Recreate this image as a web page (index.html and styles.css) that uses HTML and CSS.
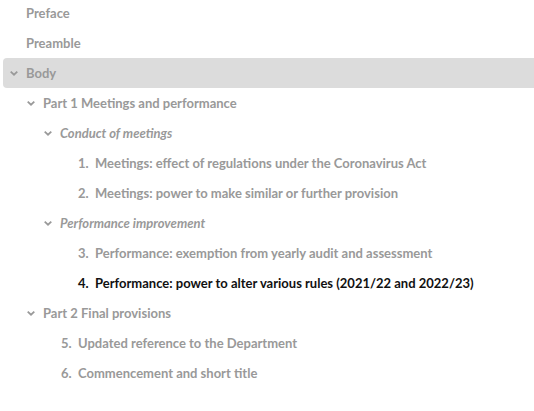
FILE: index.html
```html
<!DOCTYPE html>
<html lang="en">
<head>
    <meta charset="UTF-8">
    <meta name="viewport" content="width=device-width, initial-scale=1.0">
    <title>Contents</title>
    <link rel="stylesheet" href="styles.css">
</head>
<body>
    <ul class="toc">
        <li class="row lvl0"><span class="label">Preface</span></li>
        <li class="row lvl0"><span class="label">Preamble</span></li>
        <li class="row lvl0 selected">
            <svg class="chev" viewBox="0 0 8 5"><path d="M0.7 0.7 L4 3.7 L7.3 0.7" /></svg>
            <span class="label">Body</span>
        </li>
        <li class="row lvl1">
            <svg class="chev" viewBox="0 0 8 5"><path d="M0.7 0.7 L4 3.7 L7.3 0.7" /></svg>
            <span class="label">Part 1 Meetings and performance</span>
        </li>
        <li class="row lvl2">
            <svg class="chev" viewBox="0 0 8 5"><path d="M0.7 0.7 L4 3.7 L7.3 0.7" /></svg>
            <span class="label italic">Conduct of meetings</span>
        </li>
        <li class="row lvl3"><span class="num">1.</span><span class="label">Meetings: effect of regulations under the Coronavirus Act</span></li>
        <li class="row lvl3"><span class="num">2.</span><span class="label">Meetings: power to make similar or further provision</span></li>
        <li class="row lvl2">
            <svg class="chev" viewBox="0 0 8 5"><path d="M0.7 0.7 L4 3.7 L7.3 0.7" /></svg>
            <span class="label italic">Performance improvement</span>
        </li>
        <li class="row lvl3"><span class="num">3.</span><span class="label">Performance: exemption from yearly audit and assessment</span></li>
        <li class="row lvl3 current"><span class="num">4.</span><span class="label">Performance: power to alter various rules (2021/22 and 2022/23)</span></li>
        <li class="row lvl1">
            <svg class="chev" viewBox="0 0 8 5"><path d="M0.7 0.7 L4 3.7 L7.3 0.7" /></svg>
            <span class="label">Part 2 Final provisions</span>
        </li>
        <li class="row lvl2-num"><span class="num">5.</span><span class="label">Updated reference to the Department</span></li>
        <li class="row lvl2-num"><span class="num">6.</span><span class="label">Commencement and short title</span></li>
    </ul>
</body>
</html>
```

FILE: styles.css
```css
* {
    margin: 0;
    padding: 0;
    box-sizing: border-box;
}

body {
    font-family: Lato, "Liberation Sans", sans-serif;
    font-weight: 700;
    font-size: 13px;
    color: #999;
    background: #fff;
}

.toc {
    list-style: none;
    margin-top: -2px;
    padding-left: 3px;
}

.row {
    display: flex;
    align-items: center;
    height: 30px;
    white-space: nowrap;
}

.selected {
    background: #dcdcdc;
    border-radius: 4px 0 0 4px;
}

.chev {
    width: 8px;
    height: 5px;
    margin-right: 8px;
    flex: none;
}

.chev path {
    fill: none;
    stroke: #999;
    stroke-width: 1.8;
}

.lvl0 { padding-left: 23px; }
.lvl0.selected { padding-left: 7px; }
.lvl1 { padding-left: 24px; }
.lvl2 { padding-left: 41px; }
.lvl3 { padding-left: 75px; }
.lvl2-num { padding-left: 58px; }

.num {
    width: 17px;
}

.italic {
    font-style: italic;
}

.current {
    color: #111;
}
```
